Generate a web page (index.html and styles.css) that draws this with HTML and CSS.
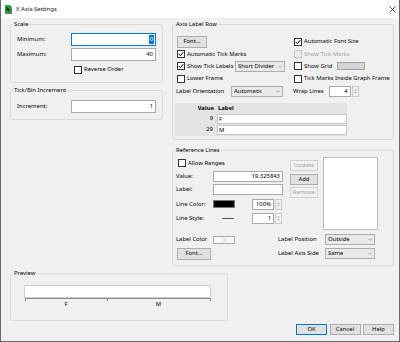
FILE: index.html
```html
<!DOCTYPE html>
<html>
<head>
<meta charset="utf-8">
<title>X Axis Settings</title>
<link rel="stylesheet" href="styles.css">
</head>
<body>
<div class="window">
  <div class="titlebar">
    <svg class="appicon" width="7" height="9" viewBox="0 0 7 9"><path d="M0 0h5l2 2v7H0z" fill="#2f9e44"/><path d="M1.6 1.8l3.6 2.6-1.6.3 1 2-.8.4-1-2-1.2 1.1z" fill="#1b1b1b"/></svg>
    <span class="title">X Axis Settings</span>
    <svg class="close" width="7" height="7" viewBox="0 0 7 7"><path d="M.5.5l6 6M6.5.5l-6 6" stroke="#333" stroke-width=".8"/></svg>
  </div>
  <div class="content">
    <div class="top">
      <div class="col-left">
        <fieldset class="group g-scale">
          <legend>Scale</legend>
          <div class="gbody">
            <div class="frow"><span class="flabel">Minimum:</span><span class="input focus"><span class="sel">0</span></span></div>
            <div class="frow"><span class="flabel">Maximum:</span><span class="input">40</span></div>
            <div class="crow rev"><span class="cb"></span>Reverse Order</div>
          </div>
        </fieldset>
        <fieldset class="group g-tick">
          <legend>Tick/Bin Increment</legend>
          <div class="gbody">
            <div class="frow"><span class="flabel">Increment:</span><span class="input">1</span></div>
          </div>
        </fieldset>
      </div>
      <div class="col-right">
        <fieldset class="group g-axis">
          <legend>Axis Label Row</legend>
          <div class="gbody">
            <div class="agrid">
              <div class="cell"><span class="btn fontbtn">Font...</span></div>
              <div class="crow"><span class="cb on"><svg viewBox="0 0 6 6"><path d="M.8 3l1.6 1.7L5.3 1.2" stroke="#000" fill="none" stroke-width="1"/></svg></span>Automatic Font Size</div>
              <div class="crow ind"><span class="cb on"><svg viewBox="0 0 6 6"><path d="M.8 3l1.6 1.7L5.3 1.2" stroke="#000" fill="none" stroke-width="1"/></svg></span>Automatic Tick Marks</div>
              <div class="crow distext"><span class="cb dis"></span>Show Tick Marks</div>
              <div class="crow ind"><span class="cb on"><svg viewBox="0 0 6 6"><path d="M.8 3l1.6 1.7L5.3 1.2" stroke="#000" fill="none" stroke-width="1"/></svg></span>Show Tick Labels<span class="dd dd-short"><span class="ddt">Short Divider</span><svg class="chev" viewBox="0 0 5 3"><path d="M.5.5l2 2 2-2" stroke="#666" fill="none" stroke-width=".7"/></svg></span></div>
              <div class="crow"><span class="cb"></span>Show Grid<span class="gridswatch"></span></div>
              <div class="crow ind"><span class="cb"></span>Lower Frame</div>
              <div class="crow"><span class="cb"></span>Tick Marks Inside Graph Frame</div>
              <div class="crow">Label Orientation<span class="dd dd-orient"><span class="ddt">Automatic</span><svg class="chev" viewBox="0 0 5 3"><path d="M.5.5l2 2 2-2" stroke="#666" fill="none" stroke-width=".7"/></svg></span></div>
              <div class="crow wrap">Wrap Lines<span class="input small">4</span><span class="spin"><svg viewBox="0 0 7 11"><path d="M2 4.2h3L3.5 2.6z M2 6.8h3L3.5 8.4z" fill="#555"/></svg></span></div>
            </div>
            <div class="vtable">
              <div class="th th-val">Value</div><div class="th">Label</div>
              <div class="tv">9</div><div class="tl"><span class="tin">F</span></div>
              <div class="tv">29</div><div class="tl"><span class="tin">M</span></div>
            </div>
          </div>
        </fieldset>
        <fieldset class="group g-ref">
          <legend>Reference Lines</legend>
          <div class="gbody">
            <div class="reftop">
              <div class="rform">
                <div class="crow allow"><span class="cb"></span>Allow Ranges</div>
                <span>Value:</span><span class="input rin">19.325843</span>
                <span>Label:</span><span class="input rin"></span>
                <span>Line Color:</span>
                <div class="rcell"><span class="rpre"><span class="blackswatch"></span></span><span class="input tiny">100%</span><span class="spin"><svg viewBox="0 0 7 11"><path d="M2 4.2h3L3.5 2.6z M2 6.8h3L3.5 8.4z" fill="#555"/></svg></span></div>
                <span>Line Style:</span>
                <div class="rcell"><span class="rpre"><span class="stylesample"></span></span><span class="input tiny">1</span><span class="spin"><svg viewBox="0 0 7 11"><path d="M2 4.2h3L3.5 2.6z M2 6.8h3L3.5 8.4z" fill="#555"/></svg></span></div>
              </div>
              <div class="rbtns">
                <span class="btn dis">Update</span>
                <span class="btn">Add</span>
                <span class="btn dis">Remove</span>
              </div>
              <div class="listbox"></div>
            </div>
            <div class="refbot">
              <div class="crow">
                <span class="lc">Label Color</span><span class="lcswatch"><svg viewBox="0 0 5 4"><path d="M1 .5l3 3M4 .5l-3 3" stroke="#999" stroke-width=".5"/></svg></span>
              </div>
              <span>Label Position</span>
              <span class="dd dd-ref"><span class="ddt">Outside</span><svg class="chev" viewBox="0 0 5 3"><path d="M.5.5l2 2 2-2" stroke="#666" fill="none" stroke-width=".7"/></svg></span>
              <div class="cell"><span class="btn fontbtn2">Font...</span></div>
              <span>Label Axis Side</span>
              <span class="dd dd-ref"><span class="ddt">Same</span><svg class="chev" viewBox="0 0 5 3"><path d="M.5.5l2 2 2-2" stroke="#666" fill="none" stroke-width=".7"/></svg></span>
            </div>
          </div>
        </fieldset>
      </div>
    </div>
    <fieldset class="group g-prev">
      <legend>Preview</legend>
      <div class="gbody">
        <div class="pbar"></div>
        <svg class="paxis" width="188" height="3" viewBox="0 0 188 3"><path d="M1 .5H187M1.5 0v3M83.5 0v3M186.5 0v3" stroke="#8a8a8a" stroke-width="1"/></svg>
        <div class="plabels"><span class="pl-f">F</span><span class="pl-m">M</span></div>
      </div>
    </fieldset>
    <div class="dlgbtns">
      <span class="btn dbtn default">OK</span>
      <span class="btn dbtn">Cancel</span>
      <span class="btn dbtn">Help</span>
    </div>
  </div>
</div>
</body>
</html>
```
FILE: styles.css
```css
* { box-sizing: border-box; margin: 0; padding: 0; }
html, body { width: 400px; height: 342px; overflow: hidden; }
body {
  font-family: "Noto Sans", "Open Sans", sans-serif;
  font-size: 5.9px;
  line-height: 9px;
  color: #000;
  background: #3a3a3a;
}
.window {
  width: 400px;
  height: 342px;
  display: flex;
  flex-direction: column;
  background: #f0f0f0;
  border: 1px solid #6a6a6a;
  border-top: 0;
}
.titlebar {
  height: 18px;
  flex: none;
  background: #fff;
  display: flex;
  align-items: center;
  padding: 0 3px 0 4px;
}
.appicon { flex: none; }
.title { margin-left: 4px; font-size: 6px; color: #111; }
.close { margin-left: auto; flex: none; }

.content {
  flex: 1;
  padding: 2px 4px 0 9px;
  display: flex;
  flex-direction: column;
}
.top { display: flex; gap: 9px; }
.col-left { width: 153px; display: flex; flex-direction: column; gap: 3px; }
.col-right { width: 222px; display: flex; flex-direction: column; gap: 6px; }

.group {
  border: 1px solid #d9d9d9;
  border-radius: 3px;
  min-width: 0;
  padding: 0;
  margin: 0;
}
.group > legend {
  margin-left: 2px;
  padding: 0 1px;
  line-height: 9px;
}

.frow { display: flex; align-items: center; height: 13px; }
.frow + .frow { margin-top: 2px; }
.flabel { width: 54px; flex: none; }
.input {
  display: flex;
  align-items: center;
  justify-content: flex-end;
  height: 13px;
  width: 85px;
  background: #fff;
  border: 1px solid #a9a9a9;
  padding: 0 2px;
  flex: none;
}
.input.focus { border-color: #0078d7; padding-right: 1px; }
.sel { background: #0078d7; color: #fff; padding: 0 1px; line-height: 9px; }

.crow { display: flex; align-items: center; white-space: nowrap; }
.cb {
  width: 8px;
  height: 8px;
  border: 1px solid #333;
  background: #fff;
  margin-right: 2px;
  flex: none;
  display: flex;
  align-items: center;
  justify-content: center;
}
.cb svg { width: 6px; height: 6px; }
.cb.dis { border-color: #c4c4c4; background: #ededed; }
.distext { color: #a0a0a0; }

.g-scale .gbody { padding: 4px 6px 7px 6px; }
.rev { height: 11px; margin-top: 3px; padding-left: 57px; }
.g-tick .gbody { padding: 5px 6px 6px 6px; }

.btn {
  display: flex;
  align-items: center;
  justify-content: center;
  height: 11px;
  background: #e1e1e1;
  border: 1px solid #adadad;
  white-space: nowrap;
}
.btn.dis { background: #f2f2f2; border-color: #d0d0d0; color: #a0a0a0; }

.g-axis .gbody { padding: 6px 4px 3px 3px; }
.agrid {
  display: grid;
  grid-template-columns: 118px 1fr;
  grid-template-rows: 13px 12px 12px 13px 13px;
  align-items: center;
}
.cell { display: flex; align-items: center; }
.fontbtn { width: 30px; height: 12px; margin-left: 1px; }
.ind { margin-left: 1px; }
.dd {
  display: flex;
  align-items: center;
  height: 11px;
  background: #e9e9e9;
  border: 1px solid #adadad;
  padding: 0 2px 0 2px;
  flex: none;
}
.ddt { overflow: hidden; white-space: nowrap; }
.chev { width: 4px; height: 3px; margin-left: auto; flex: none; }
.dd-short { width: 50px; margin-left: auto; margin-right: 9px; }
.dd-orient { width: 52px; margin-left: auto; margin-right: 11px; }
.gridswatch {
  width: 28px;
  height: 8px;
  background: #d6d6d6;
  border: 1px solid #a0a0a0;
  margin-left: 5px;
}
.wrap { margin-left: -1px; }
.input.small { width: 22px; height: 11px; margin-left: 5px; }
.spin {
  width: 7px;
  height: 11px;
  margin-left: 1px;
  background: #f4f4f4;
  border: 1px solid #c9c9c9;
  display: flex;
  flex: none;
}
.spin svg { width: 100%; height: 100%; }

.vtable {
  margin-top: 4.5px;
  margin-left: -1px;
  width: 172px;
  background: #e3e3e3;
  display: grid;
  grid-template-columns: 42px 130px;
  grid-template-rows: 10px 11px 11px;
  padding-bottom: 1px;
}
.th { font-weight: bold; line-height: 10px; padding-left: 1px; }
.th-val { text-align: right; padding-right: 3px; padding-left: 0; }
.tv { text-align: right; padding-right: 4px; line-height: 11px; }
.tl { padding-top: 1px; }
.tin {
  display: block;
  height: 10px;
  background: #fff;
  border: 1px solid #c8c8c8;
  padding-left: 1px;
  line-height: 8px;
}

.g-ref .gbody { padding: 2px 15px 5px 3px; }
.reftop { display: flex; align-items: flex-start; }
.rform {
  display: grid;
  grid-template-columns: 37px 70px;
  grid-template-rows: 13px 13px 14px 15px 14px;
  align-items: center;
}
.allow { grid-column: 1 / 3; margin-left: 2px; }
.input.rin { width: 70px; height: 11px; }
.rcell { display: flex; align-items: center; }
.rpre { width: 39px; flex: none; display: flex; align-items: center; }
.blackswatch { width: 22px; height: 8px; background: #000; border: 1px solid #777; }
.stylesample { width: 12px; height: 1px; background: #555; margin-left: 9px; }
.input.tiny { width: 22px; height: 11px; }
.rbtns {
  display: flex;
  flex-direction: column;
  gap: 2.5px;
  margin-left: 7px;
  padding-top: 3.5px;
  width: 28px;
  flex: none;
}
.listbox {
  margin-left: 5px;
  margin-top: 0.5px;
  width: 55px;
  height: 73px;
  background: #fff;
  border: 1px solid #bdbdbd;
  flex: none;
}
.refbot {
  display: grid;
  grid-template-columns: 102px 47px 50px;
  grid-template-rows: 13px 13px;
  row-gap: 1px;
  margin-top: 3px;
  align-items: center;
}
.lc { width: 37px; flex: none; }
.lcswatch {
  width: 22px;
  height: 8px;
  background: #f8f8f8;
  border: 1px solid #a9a9a9;
  display: flex;
  align-items: center;
  justify-content: center;
}
.lcswatch svg { width: 5px; height: 4px; }
.fontbtn2 { width: 34px; height: 12px; margin-left: 1px; }
.dd-ref { width: 50px; }

.g-prev { width: 218px; margin-top: 2.5px; }
.g-prev .gbody { padding: 7.5px 0 12px 13px; }
.pbar { width: 187px; height: 13px; background: #fff; border: 1px solid #cfcfcf; }
.paxis { display: block; }
.plabels { display: flex; margin-left: 1px; line-height: 7px; }
.pl-f { width: 82px; text-align: center; }
.pl-m { width: 103px; text-align: center; }

.dlgbtns {
  display: flex;
  justify-content: flex-end;
  gap: 2.5px;
  margin-top: 3px;
  padding-right: 1px;
}
.dbtn { width: 31px; height: 11px; }
.dbtn.default { border-color: #0078d7; }
```
